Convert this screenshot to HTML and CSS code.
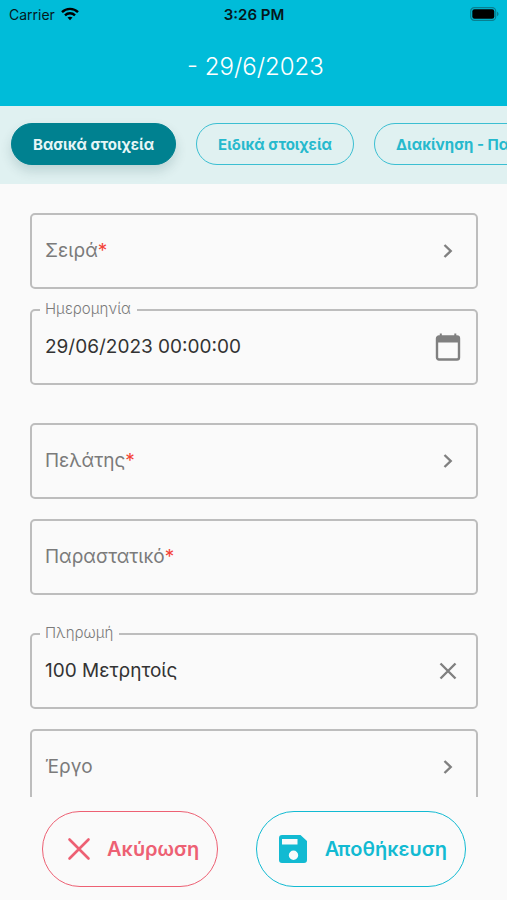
FILE: index.html
```html
<!DOCTYPE html>
<html lang="el">
<head>
<meta charset="utf-8">
<meta name="viewport" content="width=device-width, initial-scale=1">
<title>29/6/2023</title>
<link rel="stylesheet" href="styles.css">
</head>
<body>
<header class="header">
  <div class="status">
    <div class="carrier">
      <span>Carrier</span>
      <svg width="18" height="14" viewBox="0 0 18 14" fill="none" stroke="#000" stroke-width="2.4" aria-hidden="true">
        <path d="M1 5.2C5.4.8 12.6.8 17 5.2"/>
        <path d="M4 8.3c2.8-2.7 7.2-2.7 10 0"/>
        <path d="M6.5 10.6c1.5-1.3 3.5-1.3 5 0L9 13.2z" fill="#000" stroke="none"/>
      </svg>
    </div>
    <span class="time">3:26 PM</span>
    <svg class="battery" width="29" height="14" viewBox="0 0 29 14" aria-hidden="true">
      <rect x=".7" y=".7" width="25" height="12.6" rx="3.6" fill="none" stroke="#087f91" stroke-width="1.2"/>
      <rect x="2.3" y="2.3" width="22" height="9.4" rx="2.2"/>
      <path d="M27 4.8c2 .7 2 3.700 0 4.400z" fill="#087f91"/>
    </svg>
  </div>
  <h1 class="title">- 29/6/2023</h1>
</header>
<nav class="tabs">
  <button class="tab active" type="button">Βασικά στοιχεία</button>
  <button class="tab" type="button">Ειδικά στοιχεία</button>
  <button class="tab" type="button">Διακίνηση - Παράδοση</button>
</nav>
<form class="form" id="entry">
  <div class="group">
    <div class="field">
      <label for="series">Σειρά<span class="required">*</span></label>
      <input id="series" type="text">
      <button class="icon" type="button" aria-label="Επιλογή σειράς"><svg width="30" height="30" viewBox="0 0 30 30"><path d="m11.500 9 6.200 6-6.200 6"/></svg></button>
    </div>
    <div class="field filled">
      <label for="date">Ημερομηνία</label>
      <input id="date" type="text" value="29/06/2023 00:00:00">
      <button class="icon" type="button" aria-label="Ημερολόγιο"><svg width="30" height="30" viewBox="0 0 30 30"><rect x="4" y="4.500" width="22" height="23" rx="2"/><path class="solid" d="M4 4.500h22v6H4zM6.800 1.500h2v3h-2zM21.300 1.500h2v3h-2z"/></svg></button>
    </div>
  </div>
  <div class="group">
    <div class="field">
      <label for="customer">Πελάτης<span class="required">*</span></label>
      <input id="customer" type="text">
      <button class="icon" type="button" aria-label="Επιλογή πελάτη"><svg width="30" height="30" viewBox="0 0 30 30"><path d="m11.500 9 6.200 6-6.200 6"/></svg></button>
    </div>
    <div class="field">
      <label for="document">Παραστατικό<span class="required">*</span></label>
      <input id="document" type="text">
    </div>
  </div>
  <div class="group">
    <div class="field filled">
      <label for="payment">Πληρωμή</label>
      <input id="payment" type="text" value="100 Μετρητοίς">
      <button class="icon" type="button" aria-label="Καθαρισμός"><svg width="30" height="30" viewBox="0 0 30 30"><path d="m7.500 7.500 15 15m0-15-15 15"/></svg></button>
    </div>
    <div class="field">
      <label for="project">Έργο</label>
      <input id="project" type="text">
      <button class="icon" type="button" aria-label="Επιλογή έργου"><svg width="30" height="30" viewBox="0 0 30 30"><path d="m11.500 9 6.200 6-6.200 6"/></svg></button>
    </div>
  </div>
</form>
<footer class="actions">
  <button class="action cancel" type="button">
    <svg width="32" height="32" viewBox="0 0 32 32" fill="none" stroke="currentColor" stroke-width="2.600" stroke-linecap="round" aria-hidden="true"><path d="m6.500 6.500 19 19m0-19-19 19"/></svg>
    Ακύρωση
  </button>
  <button class="action save" type="submit" form="entry">
    <svg width="32" height="32" viewBox="0 0 32 32" aria-hidden="true"><path fill="currentColor" fill-rule="evenodd" d="M5 2h18.500L30 8v19a3 3 0 0 1-3 3H5a3 3 0 0 1-3-3V5a3 3 0 0 1 3-3zm0 4v5.500h15.500V6zm11.500 11.500a4.700 4.700 0 1 0 0 9.400 4.700 4.700 0 0 0 0-9.400z"/></svg>
    Αποθήκευση
  </button>
</footer>
</body>
</html>
```
FILE: styles.css
```css
* {
  box-sizing: border-box;
}

body {
  margin: 0;
  height: 100vh;
  display: flex;
  flex-direction: column;
  background: #fafafa;
  font-family: Inter, "Noto Sans", sans-serif;
}

button,
input {
  font: inherit;
  margin: 0;
}

.header {
  flex: none;
  height: 106px;
  background: #00bcd9;
}

.status {
  display: grid;
  grid-template-columns: 1fr auto 1fr;
  align-items: center;
  height: 28px;
  padding: 0 8px 0 9px;
  font-size: 14px;
  color: #05181c;
}

.carrier {
  display: flex;
  align-items: center;
  gap: 6px;
}

.time {
  font-size: 15px;
  font-weight: 600;
}

.battery {
  justify-self: end;
}

.title {
  margin: 0;
  padding: 23px 0 0 4px;
  font-size: 24px;
  line-height: 32px;
  font-weight: 300;
  color: #fff;
  text-align: center;
}

.tabs {
  flex: none;
  display: flex;
  gap: 20px;
  height: 78px;
  padding: 17px 11px 0;
  background: #e0f1f1;
  overflow: hidden;
}

.tab {
  flex: none;
  height: 42px;
  padding: 0 21px;
  border: 1px solid #3bbfd2;
  border-radius: 21px;
  background: transparent;
  color: #26b9cd;
  font-size: 15px;
  font-weight: 700;
}

.tab.active {
  border-color: #008190;
  background: #008190;
  color: #e6f6f7;
  box-shadow: 0 6px 12px rgb(0 60 70 / 16%);
}

.form {
  flex: 1;
  min-height: 0;
  display: flex;
  flex-direction: column;
  gap: 38px;
  padding: 29px 29px 0 30px;
  overflow: auto;
  scrollbar-width: none;
}

.group {
  display: flex;
  flex-direction: column;
  gap: 20px;
}

.field {
  position: relative;
  display: flex;
  align-items: center;
  flex: none;
  height: 76px;
  padding: 0 13px;
  border: 2px solid #bdbdbd;
  border-radius: 5px;
  font-size: 19px;
  color: #7b7b7b;
}

.field label {
  flex: none;
  padding-bottom: 2px;
}

.field.filled label {
  position: absolute;
  top: -12px;
  left: 8px;
  padding: 0 6px 0 5px;
  background: #fafafa;
  font-size: 15px;
  line-height: 20px;
  font-weight: 300;
}

.required {
  color: #f44336;
}

.field input {
  flex: 1;
  min-width: 0;
  padding: 0 0 2px;
  border: 0;
  outline: 0;
  background: transparent;
  color: #333;
}

.icon {
  flex: none;
  display: flex;
  padding: 0;
  border: 0;
  background: transparent;
}

.icon svg {
  fill: none;
  stroke: #808080;
  stroke-width: 2.4;
}

.icon .solid {
  fill: #808080;
  stroke: none;
}

.actions {
  flex: none;
  display: flex;
  justify-content: space-between;
  padding: 14px 41px 13px 42px;
}

.action {
  display: flex;
  align-items: center;
  justify-content: center;
  height: 76px;
  padding: 0 18px 0 20px;
  border: 1px solid currentColor;
  border-radius: 38px;
  background: transparent;
  font-size: 20px;
  font-weight: 600;
}

.cancel {
  gap: 12px;
  color: #ed6073;
}

.save {
  gap: 16px;
  color: #12bad2;
}
```
